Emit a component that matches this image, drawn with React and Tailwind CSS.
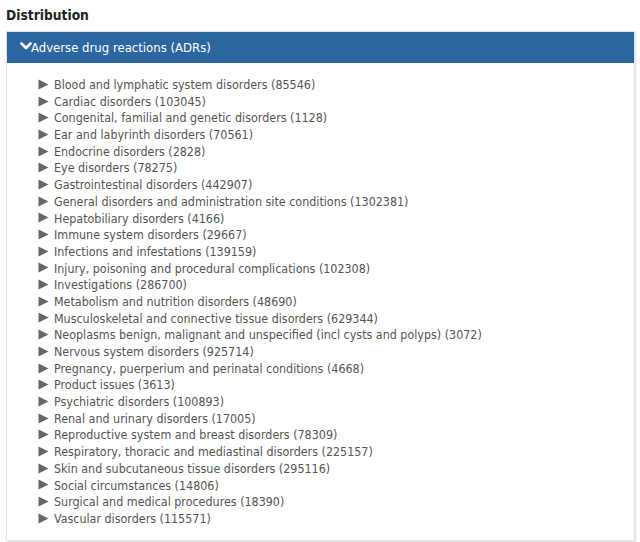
import React from 'react';

const items = [
  ['Blood and lymphatic system disorders', 85546],
  ['Cardiac disorders', 103045],
  ['Congenital, familial and genetic disorders', 1128],
  ['Ear and labyrinth disorders', 70561],
  ['Endocrine disorders', 2828],
  ['Eye disorders', 78275],
  ['Gastrointestinal disorders', 442907],
  ['General disorders and administration site conditions', 1302381],
  ['Hepatobiliary disorders', 4166],
  ['Immune system disorders', 29667],
  ['Infections and infestations', 139159],
  ['Injury, poisoning and procedural complications', 102308],
  ['Investigations', 286700],
  ['Metabolism and nutrition disorders', 48690],
  ['Musculoskeletal and connective tissue disorders', 629344],
  ['Neoplasms benign, malignant and unspecified (incl cysts and polyps)', 3072],
  ['Nervous system disorders', 925714],
  ['Pregnancy, puerperium and perinatal conditions', 4668],
  ['Product issues', 3613],
  ['Psychiatric disorders', 100893],
  ['Renal and urinary disorders', 17005],
  ['Reproductive system and breast disorders', 78309],
  ['Respiratory, thoracic and mediastinal disorders', 225157],
  ['Skin and subcutaneous tissue disorders', 295116],
  ['Social circumstances', 14806],
  ['Surgical and medical procedures', 18390],
  ['Vascular disorders', 115571],
];

const font = { fontFamily: '"DejaVu Sans Condensed", "DejaVu Sans", Verdana, sans-serif' };

export default function App() {
  return (
    <div className="bg-white w-[640px] h-[542px] px-[6px] pt-[5px]" style={font}>
      <h3 className="text-[13.7px] font-bold text-[#222] leading-[20px] mb-[6px]">Distribution</h3>
      <div className="border border-[#e3e3e3] shadow-[1px_1px_2px_rgba(0,0,0,0.12)] w-[629px]">
        <div className="bg-[#2b66a0] h-[31px] flex items-center pl-[13px] text-white text-[13px]">
          <svg width="12" height="10" viewBox="0 0 12 10" className="mr-[-1px] mt-[-4px]">
            <path d="M1.5 2.5 L6 7 L10.5 2.5" stroke="white" strokeWidth="2.6" fill="none" strokeLinecap="round" strokeLinejoin="round" />
          </svg>
          <span>Adverse drug reactions (ADRs)</span>
        </div>
        <ul className="pl-[31px] pt-[14px] pb-[12px]">
          {items.map(([name, n]) => (
            <li key={name} className="flex items-center h-[16.7px] text-[12.4px] text-[#555]">
              <svg width="11" height="11" viewBox="0 0 11 11" className="mr-[5px] mt-[-2px]">
                <path d="M0.5 0.5 L10.5 5.5 L0.5 10.5 Z" fill="#666" />
              </svg>
              <span>{name} ({n})</span>
            </li>
          ))}
        </ul>
      </div>
    </div>
  );
}
